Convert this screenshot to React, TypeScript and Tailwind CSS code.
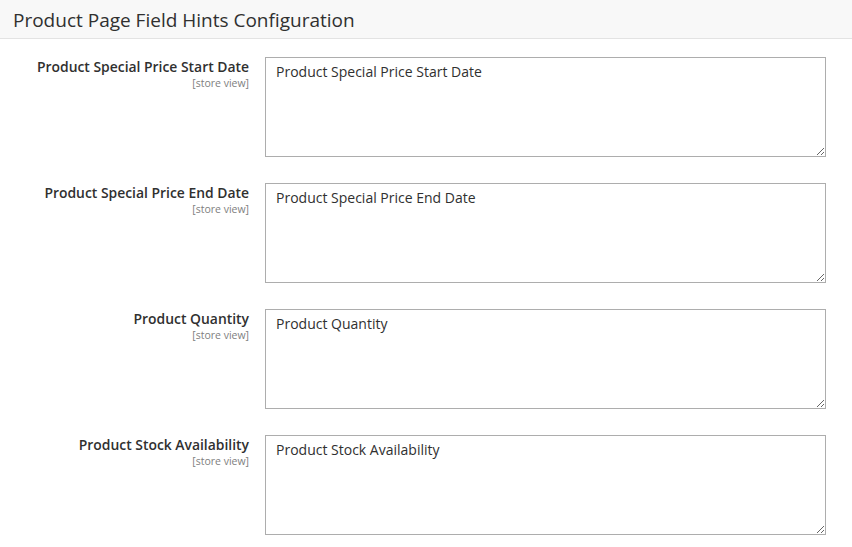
const fields = [
  "Product Special Price Start Date",
  "Product Special Price End Date",
  "Product Quantity",
  "Product Stock Availability",
];

export default function App() {
  return (
    <div className="min-h-screen bg-white text-[#303030]" style={{ fontFamily: '"Open Sans", "Liberation Sans", sans-serif' }}>
      <div className="h-[39px] bg-[#f8f8f8] border-b border-[#e3e3e3] flex items-center px-[13px] pt-[3px]">
        <h1 className="text-[19px] leading-none text-[#303030]">Product Page Field Hints Configuration</h1>
      </div>
      <div className="pt-[18px]">
        {fields.map((f) => (
          <div key={f} className="flex mb-[26px]">
            <div className="w-[250px] shrink-0 pr-px pt-px text-right">
              <div className="text-[13.9px] font-semibold leading-[18px] text-[#303030]">{f}</div>
              <div className="text-[10.5px] leading-[14px] text-[#808080]">[store view]</div>
            </div>
            <textarea
              defaultValue={f}
              className="ml-[15px] w-[561px] h-[100px] border border-[#adadad] rounded-none px-[10px] py-[4px] text-[14px] leading-[20px] text-[#303030] outline-none resize"
              style={{ fontFamily: '"Open Sans", "Liberation Sans", sans-serif' }}
            />
          </div>
        ))}
      </div>
    </div>
  );
}
